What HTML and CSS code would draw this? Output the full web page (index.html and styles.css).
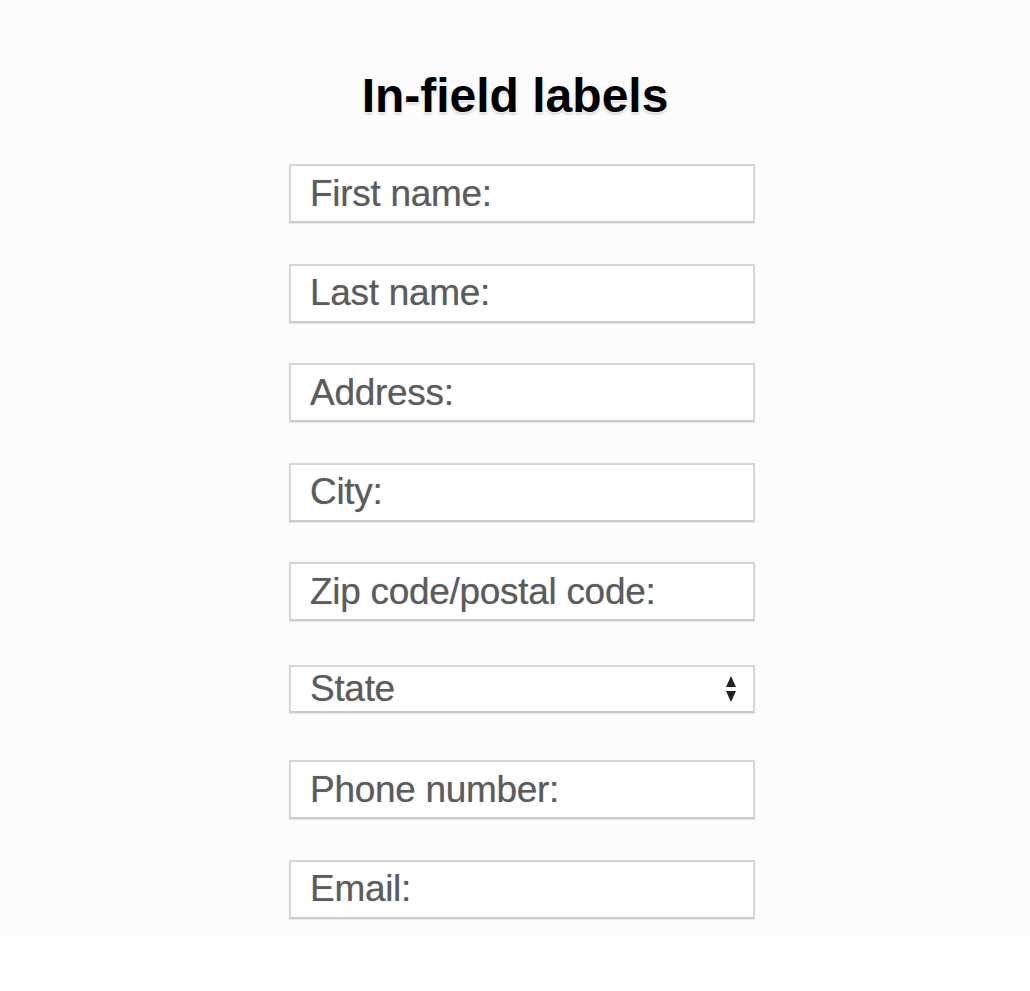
FILE: index.html
```html
<!DOCTYPE html>
<html lang="en">
<head>
  <meta charset="UTF-8">
  <title>In-field labels</title>
  <link rel="stylesheet" href="styles.css">
</head>
<body>
  <div class="page">
    <h1 class="title">In-field labels</h1>
    <form class="form">
      <input class="field" type="text" placeholder="First name:">
      <input class="field" type="text" placeholder="Last name:">
      <input class="field" type="text" placeholder="Address:">
      <input class="field" type="text" placeholder="City:">
      <input class="field" type="text" placeholder="Zip code/postal code:">
      <div class="select">
        <span class="select-text">State</span>
        <svg class="select-arrows" width="12" height="28" viewBox="0 0 12 28">
          <path d="M6 1 L11 12 L1 12 Z" fill="#222"/>
          <path d="M6 27 L11 16 L1 16 Z" fill="#222"/>
        </svg>
      </div>
      <input class="field" type="text" placeholder="Phone number:">
      <input class="field" type="text" placeholder="Email:">
    </form>
  </div>
</body>
</html>
```

FILE: styles.css
```css
body {
  margin: 0;
  background: #fff;
  font-family: "Liberation Sans", Arial, sans-serif;
}

.page {
  height: 935px;
  background: #fcfcfc;
  padding-top: 68px;
  box-sizing: border-box;
}

.title {
  margin: 0;
  text-align: center;
  font-size: 48px;
  font-weight: bold;
  line-height: 56px;
  color: #000;
  text-shadow:
    0 0 2px #fff, 0 0 3px #fff, 0 0 3px #fff,
    0 2px 3px rgba(0, 0, 0, 0.25);
}

.form {
  width: 466px;
  margin: 40px 0 0 289px;
  display: flex;
  flex-direction: column;
  gap: 40.5px;
}

.field,
.select {
  box-sizing: border-box;
  width: 466px;
  height: 59px;
  margin: 0;
  padding: 0 0 0 19px;
  border: 2px solid #d6d6d6;
  border-bottom-color: #cbcbcb;
  background: #fff;
  box-shadow: 0 1px 1px rgba(0, 0, 0, 0.08);
  font-family: "Liberation Sans", Arial, sans-serif;
  font-size: 37px;
  letter-spacing: -0.3px;
  color: #5c5c5c;
  text-shadow: 0 0 1px rgba(0, 0, 0, 0.35);
  outline: none;
}

.field::placeholder {
  color: #5c5c5c;
  opacity: 1;
}

.select {
  height: 48px;
  margin: 3.5px 0 6.5px;
  display: flex;
  align-items: center;
  justify-content: space-between;
  padding-right: 16px;
}

.select-arrows {
  filter: blur(0.6px);
}
```
